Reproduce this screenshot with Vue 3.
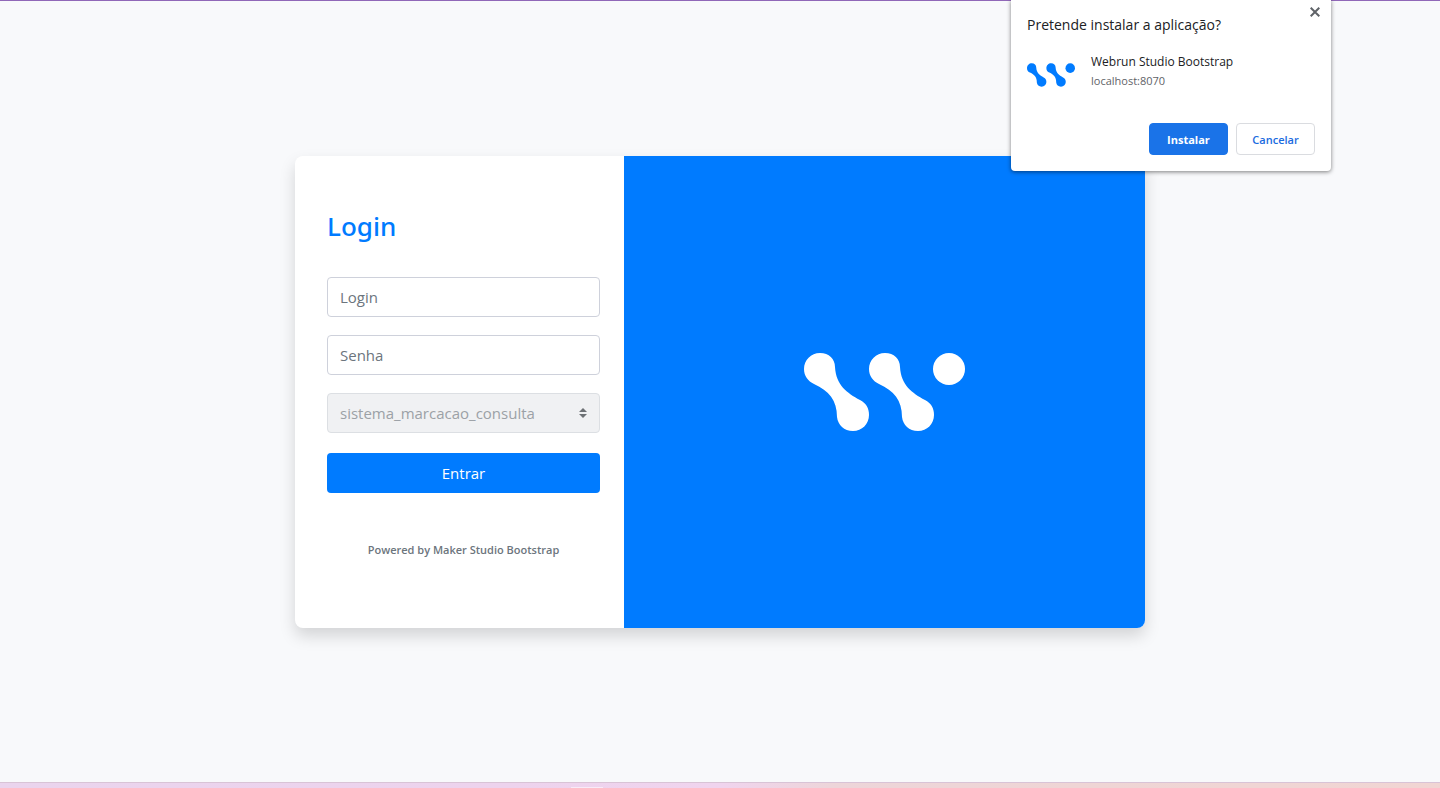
<script setup>
import { ref } from 'vue'

const login = ref('')
const password = ref('')
const system = ref('sistema_marcacao_consulta')
const promptOpen = ref(true)

const link = 'M16 0 C25 0 31 6 31 14 C32 32 43 40 56 47 C62 50 65 55 65 62 C65 71 58 78 49 78 C40 78 34 72 33 64 C33 47 25 38 10 31 C4 28 0 23 0 16 C0 7 7 0 16 0 Z'
</script>

<template>
  <div class="page">
    <div class="edge-top"></div>
    <main class="stage">
      <section class="card">
        <form class="form" @submit.prevent>
          <h1 class="title">Login</h1>
          <input v-model="login" class="field" type="text" placeholder="Login" aria-label="Login" />
          <input v-model="password" class="field" type="password" placeholder="Senha" aria-label="Senha" />
          <div class="select-wrap">
            <select v-model="system" class="field select" aria-label="Sistema" disabled>
              <option value="sistema_marcacao_consulta">sistema_marcacao_consulta</option>
            </select>
            <svg class="arrows" viewBox="0 0 8 10" aria-hidden="true">
              <path d="M4 0 L8 4 H0 Z M0 6 H8 L4 10 Z" fill="#6d7175" />
            </svg>
          </div>
          <button class="submit" type="submit">Entrar</button>
          <p class="powered">Powered by Maker Studio Bootstrap</p>
        </form>
        <div class="brand">
          <svg class="brand-logo" viewBox="0 0 161 78" role="img" aria-label="Webrun">
            <g fill="#fff">
              <path :d="link" />
              <path :d="link" transform="translate(65 0)" />
              <circle cx="145" cy="16" r="16" />
            </g>
          </svg>
        </div>
      </section>
    </main>
    <div class="edge-bottom"><span class="tab"></span></div>

    <aside v-if="promptOpen" class="prompt" role="dialog" aria-labelledby="prompt-title">
      <button class="close" type="button" aria-label="Fechar" @click="promptOpen = false">
        <svg viewBox="0 0 10 10" aria-hidden="true">
          <path d="M0.7 0.7 L9.3 9.3 M9.3 0.7 L0.7 9.3" stroke="#5f6368" stroke-width="2" />
        </svg>
      </button>
      <h2 id="prompt-title" class="prompt-title">Pretende instalar a aplicação?</h2>
      <div class="app">
        <svg class="app-logo" viewBox="0 0 161 78" aria-hidden="true">
          <g fill="#007bff">
            <path :d="link" />
            <path :d="link" transform="translate(65 0)" />
            <circle cx="145" cy="16" r="16" />
          </g>
        </svg>
        <div>
          <div class="app-name">Webrun Studio Bootstrap</div>
          <div class="app-host">localhost:8070</div>
        </div>
      </div>
      <div class="actions">
        <button class="action primary" type="button">Instalar</button>
        <button class="action" type="button" @click="promptOpen = false">Cancelar</button>
      </div>
    </aside>
  </div>
</template>

<style>
body {
  margin: 0;
}
</style>

<style scoped>
.page {
  position: relative;
  display: flex;
  flex-direction: column;
  min-height: 100vh;
  background: #f8f9fb;
  font-family: "Open Sans", "Noto Sans", sans-serif;
}
.page * {
  box-sizing: border-box;
}
.edge-top {
  height: 1px;
  background: #9068b8;
}
.stage {
  flex: 1;
  display: flex;
  align-items: center;
  justify-content: center;
}
.card {
  display: grid;
  grid-template-columns: 329px 1fr;
  width: 100%;
  max-width: 850px;
  border-radius: 8px;
  overflow: hidden;
  background: #fff;
  box-shadow: 0 8px 16px rgba(0, 0, 0, 0.15);
}
.form {
  display: flex;
  flex-direction: column;
  padding: 48px 24px 68px 32px;
}
.title {
  margin: 0 0 29px;
  font-family: "Noto Sans", "Open Sans", sans-serif;
  font-size: 26px;
  line-height: 44px;
  font-weight: 500;
  color: #007bff;
}
.field {
  width: 100%;
  height: 40px;
  margin: 0 0 18px;
  padding: 0 12px;
  border: 1px solid #ced1db;
  border-radius: 4px;
  background: #fff;
  color: #495057;
  font-family: inherit;
  font-size: 15px;
}
.field::placeholder {
  color: #6c757d;
  opacity: 1;
}
.select-wrap {
  position: relative;
  margin-bottom: 20px;
}
.select {
  display: block;
  margin: 0;
  appearance: none;
  border-color: #dcdfe3;
  background: #f0f1f3;
  color: #9ca1a6;
  opacity: 1;
}
.arrows {
  position: absolute;
  right: 13px;
  top: 15px;
  width: 8px;
  height: 10px;
}
.submit {
  height: 40px;
  border: 0;
  border-radius: 4px;
  background: #007bff;
  color: #fff;
  font-family: inherit;
  font-size: 15px;
}
.powered {
  margin: 47px 0 0;
  text-align: center;
  font-size: 11px;
  line-height: 20px;
  font-weight: 600;
  color: #6c757d;
}
.brand {
  display: flex;
  align-items: center;
  justify-content: center;
  background: #007bff;
}
.brand-logo {
  width: 161px;
  height: 78px;
}
.edge-bottom {
  display: flex;
  align-items: flex-end;
  height: 6px;
  padding-left: 571px;
  border-top: 1px solid #d9c3d6;
  background: linear-gradient(90deg, #ead4ed 0%, #edd3ed 35%, #f0d4ee 50%, #edd5d9 58%, #efd5d5 75%, #f1d5d3 100%);
}
.tab {
  width: 32px;
  height: 1px;
  background: #f8ebf8;
}
.prompt {
  position: absolute;
  top: 0;
  right: 109px;
  width: 320px;
  padding: 14px 16px 16px;
  border-radius: 0 0 4px 4px;
  background: #fff;
  box-shadow: 0 1px 4px rgba(0, 0, 0, 0.5);
}
.close {
  position: absolute;
  top: 4px;
  right: 8px;
  display: flex;
  align-items: center;
  justify-content: center;
  width: 16px;
  height: 16px;
  padding: 0;
  border: 0;
  background: none;
}
.close svg {
  width: 10px;
  height: 10px;
}
.prompt-title {
  margin: 0;
  font-size: 14px;
  line-height: 22px;
  font-weight: 400;
  color: #202124;
}
.app {
  display: flex;
  align-items: flex-start;
  gap: 16px;
  margin-top: 16px;
}
.app-logo {
  width: 48px;
  height: 24px;
  margin-top: 11px;
}
.app-name {
  font-size: 12px;
  line-height: 20px;
  color: #202124;
}
.app-host {
  font-size: 11px;
  line-height: 18px;
  color: #5f6368;
}
.actions {
  display: flex;
  justify-content: flex-end;
  gap: 8px;
  margin-top: 33px;
}
.action {
  width: 79px;
  height: 32px;
  padding: 0;
  border: 1px solid #dadce0;
  border-radius: 4px;
  background: #fff;
  color: #1a6be0;
  font-family: inherit;
  font-size: 11px;
  font-weight: 600;
}
.primary {
  border-color: #1a73e8;
  background: #1a73e8;
  color: #fff;
  font-weight: 700;
}
</style>
